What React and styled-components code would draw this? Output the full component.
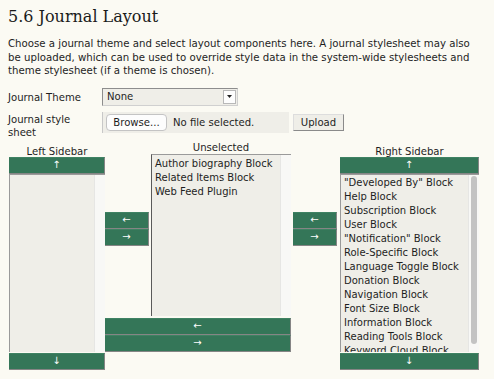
import React from "react";
import styled, { createGlobalStyle } from "styled-components";

const unselectedBlocks = [
  "Author biography Block",
  "Related Items Block",
  "Web Feed Plugin",
];

const rightBlocks = [
  "\"Developed By\" Block",
  "Help Block",
  "Subscription Block",
  "User Block",
  "\"Notification\" Block",
  "Role-Specific Block",
  "Language Toggle Block",
  "Donation Block",
  "Navigation Block",
  "Font Size Block",
  "Information Block",
  "Reading Tools Block",
  "Keyword Cloud Block",
];

function App() {
  return (
    <Page>
      <GlobalStyle />
      <Title>5.6 Journal Layout</Title>
      <Intro>
        Choose a journal theme and select layout components here. A journal
        stylesheet may also be uploaded, which can be used to override style
        data in the system-wide stylesheets and theme stylesheet (if a theme is
        chosen).
      </Intro>

      <FormRow>
        <Label $pad={3}>Journal Theme</Label>
        <Select>
          <span>None</span>
          <SelectArrow>
            <svg width="5" height="3" viewBox="0 0 5 3">
              <path d="M0 0 L5 0 L2.5 3 Z" fill="#222" />
            </svg>
          </SelectArrow>
        </Select>
      </FormRow>

      <FormRow $top={6}>
        <Label>Journal style sheet</Label>
        <FileBox>
          <BrowseButton>Browse...</BrowseButton>
          <span>No file selected.</span>
        </FileBox>
        <PlainButton>Upload</PlainButton>
      </FormRow>

      <Sidebars>
        <Column $width={96} $top={4}>
          <ColumnLabel $height={11}>Left Sidebar</ColumnLabel>
          <GreenButton>↑</GreenButton>
          <ListBox $height={178}>
            <Items />
            <ScrollTrack />
          </ListBox>
          <GreenButton $top={1}>↓</GreenButton>
        </Column>

        <Middle>
          <MiddleTop>
            <ArrowColumn>
              <GreenButton>←</GreenButton>
              <GreenButton>→</GreenButton>
            </ArrowColumn>
            <Column $width={140}>
              <ColumnLabel $height={12}>Unselected</ColumnLabel>
              <ListBox $height={162} $dark>
                <Items>
                  {unselectedBlocks.map((b) => (
                    <Item key={b}>{b}</Item>
                  ))}
                </Items>
                <ScrollTrack />
              </ListBox>
            </Column>
          </MiddleTop>
          <WideButtons>
            <GreenButton>←</GreenButton>
            <GreenButton>→</GreenButton>
          </WideButtons>
        </Middle>

        <ArrowColumn $left={2}>
          <GreenButton>←</GreenButton>
          <GreenButton>→</GreenButton>
        </ArrowColumn>

        <Column $width={139} $top={4} $left={3}>
          <ColumnLabel $height={11}>Right Sidebar</ColumnLabel>
          <GreenButton>↑</GreenButton>
          <ListBox $height={178}>
            <Items $pad={1}>
              {rightBlocks.map((b) => (
                <Item key={b}>{b}</Item>
              ))}
            </Items>
            <ScrollTrack>
              <Thumb />
            </ScrollTrack>
          </ListBox>
          <GreenButton $top={1}>↓</GreenButton>
        </Column>
      </Sidebars>
    </Page>
  );
}

export default App;

const GlobalStyle = createGlobalStyle`
  html, body {
    margin: 0;
    background: #fbfaf3;
  }
  body {
    font-family: "DejaVu Sans", Verdana, sans-serif;
    color: #1e1e1e;
  }
`;

const Page = styled.div`
  width: 494px;
  height: 379px;
  padding: 0 0 0 8px;
  box-sizing: border-box;
  overflow: hidden;
  font-size: 10.1px;
`;

const Title = styled.h3`
  margin: 0;
  padding-top: 6px;
  font-family: "DejaVu Serif", Georgia, serif;
  font-weight: normal;
  font-size: 16px;
  line-height: 22px;
  color: #1a1a1a;
`;

const Intro = styled.p`
  margin: 9px 0 0;
  width: 468px;
  font-size: 10.2px;
  line-height: 13.6px;
`;

const FormRow = styled.div`
  display: flex;
  align-items: flex-start;
  margin-top: ${(p) => p.$top || 10}px;
`;

const Label = styled.div`
  width: 94px;
  box-sizing: border-box;
  padding: ${(p) => p.$pad || 1}px 8px 0 0;
  line-height: 13.5px;
`;

const Select = styled.div`
  display: flex;
  align-items: center;
  justify-content: space-between;
  width: 136px;
  height: 18px;
  box-sizing: border-box;
  padding-left: 4px;
  background: #efeee8;
  border: 1px solid #8d8d8d;
  border-right-color: #d0d0d0;
  border-bottom-color: #d0d0d0;
`;

const SelectArrow = styled.div`
  display: flex;
  align-items: center;
  justify-content: center;
  width: 13px;
  height: 14px;
  margin-right: 1px;
  background: #fdfdfd;
  border: 1px solid #b8b8b8;
  box-sizing: border-box;
`;

const FileBox = styled.div`
  display: flex;
  align-items: center;
  gap: 6px;
  width: 187px;
  height: 21px;
  box-sizing: border-box;
  padding-left: 3px;
  background: #efeee8;
  border-left: 1px solid #c8c8c8;
`;

const BrowseButton = styled.div`
  width: 61px;
  height: 17px;
  box-sizing: border-box;
  display: flex;
  align-items: center;
  justify-content: center;
  background: #fdfdfd;
  border: 1px solid #c4c4c4;
  border-radius: 4px;
`;

const PlainButton = styled.div`
  margin: 2px 0 0 4px;
  width: 51px;
  height: 17px;
  box-sizing: border-box;
  display: flex;
  align-items: center;
  justify-content: center;
  background: #efeee8;
  border: 1px solid #dddddd;
  border-right-color: #8a8a8a;
  border-bottom-color: #8a8a8a;
`;

const Sidebars = styled.div`
  display: flex;
  align-items: flex-start;
  margin: 2px 0 0 1px;
`;

const Column = styled.div`
  display: flex;
  flex-direction: column;
  width: ${(p) => p.$width}px;
  padding-top: ${(p) => p.$top || 0}px;
  margin-left: ${(p) => p.$left || 0}px;
`;

const ColumnLabel = styled.div`
  height: ${(p) => p.$height}px;
  line-height: 11px;
  text-align: center;
`;

const GreenButton = styled.div`
  height: 17px;
  box-sizing: border-box;
  margin-top: ${(p) => p.$top || 0}px;
  display: flex;
  align-items: center;
  justify-content: center;
  background: #347658;
  border-top: 1px solid #3f8263;
  border-bottom: 1px solid #858585;
  border-right: 1px solid #858585;
  color: #ffffff;
  font-size: 10px;
  line-height: 1;
`;

const ListBox = styled.div`
  display: flex;
  height: ${(p) => p.$height}px;
  box-sizing: border-box;
  background: #efeee8;
  border-left: 1px solid ${(p) => (p.$dark ? "#5a5a5a" : "#9a9a9a")};
  border-top: 1px solid #9a9a9a;
  overflow: hidden;
`;

const Items = styled.div`
  flex: 1;
  padding: ${(p) => p.$pad || 2}px 0 0 3px;
  overflow: hidden;
`;

const Item = styled.div`
  font-size: 10px;
  line-height: 14px;
  white-space: nowrap;
`;

const ScrollTrack = styled.div`
  width: 11px;
  flex-shrink: 0;
  padding: 1px 2px 0 2px;
  box-sizing: border-box;
  background: #f8f8f6;
  border-left: 1px solid #e6e6e4;
`;

const Thumb = styled.div`
  height: 168px;
  border-radius: 4px;
  background: #c3c3c3;
`;

const Middle = styled.div`
  display: flex;
  flex-direction: column;
  width: 186px;
`;

const MiddleTop = styled.div`
  display: flex;
  align-items: flex-start;
  gap: 2px;
`;

const ArrowColumn = styled.div`
  display: flex;
  flex-direction: column;
  width: 44px;
  margin-top: 70px;
  margin-left: ${(p) => p.$left || 0}px;
`;

const WideButtons = styled.div`
  display: flex;
  flex-direction: column;
  margin-top: 2px;
`;
